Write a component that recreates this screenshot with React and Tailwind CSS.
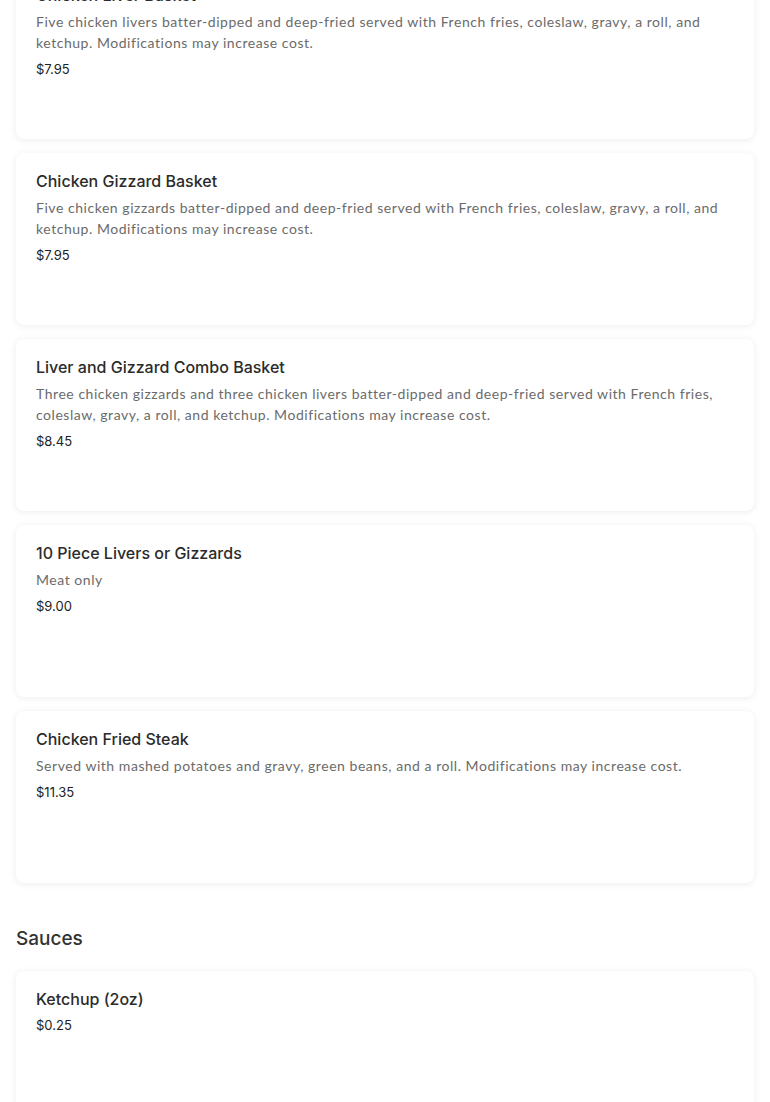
const font = { fontFamily: 'Inter, "Noto Sans", "Liberation Sans", sans-serif' }
const bodyFont = { fontFamily: 'Lato, "Liberation Sans", sans-serif' }

const mains = [
  {
    name: 'Chicken Liver Basket',
    desc: 'Five chicken livers batter-dipped and deep-fried served with French fries, coleslaw, gravy, a roll, and ketchup. Modifications may increase cost.',
    price: '$7.95',
  },
  {
    name: 'Chicken Gizzard Basket',
    desc: 'Five chicken gizzards batter-dipped and deep-fried served with French fries, coleslaw, gravy, a roll, and ketchup. Modifications may increase cost.',
    price: '$7.95',
  },
  {
    name: 'Liver and Gizzard Combo Basket',
    desc: 'Three chicken gizzards and three chicken livers batter-dipped and deep-fried served with French fries, coleslaw, gravy, a roll, and ketchup. Modifications may increase cost.',
    price: '$8.45',
  },
  { name: '10 Piece Livers or Gizzards', desc: 'Meat only', price: '$9.00' },
  {
    name: 'Chicken Fried Steak',
    desc: 'Served with mashed potatoes and gravy, green beans, and a roll. Modifications may increase cost.',
    price: '$11.35',
  },
]

const sauces = [{ name: 'Ketchup (2oz)', price: '$0.25' }]

function ItemCard({ item }) {
  return (
    <div className="bg-white rounded-lg shadow-[0_1px_7px_rgba(0,0,0,0.08)] min-h-[172px] px-5 pt-[18px] pb-5">
      <h3 className="text-[16px] leading-[20px] font-medium text-[#2b2b2b] tracking-[0px]">{item.name}</h3>
      {item.desc && (
        <p className="mt-[6px] text-[14px] leading-[21px] text-[#6b6b6b] tracking-[0.54px]" style={bodyFont}>
          {item.desc}
        </p>
      )}
      <p className="mt-[7px] text-[13px] leading-[18px] text-[#222]">{item.price}</p>
    </div>
  )
}

export default function App() {
  return (
    <div className="min-h-screen bg-white overflow-hidden" style={font}>
      <div className="px-4 -mt-[33px]">
        <div className="flex flex-col gap-[14px]">
          {mains.map((it) => (
            <ItemCard key={it.name} item={it} />
          ))}
        </div>

        {/* Sauces */}
        <h2 className="pt-[42px] pb-[18px] text-[19px] leading-[28px] font-medium text-[#333]">Sauces</h2>
        <div className="flex flex-col gap-[14px]">
          {sauces.map((it) => (
            <ItemCard key={it.name} item={it} />
          ))}
        </div>
      </div>
    </div>
  )
}
